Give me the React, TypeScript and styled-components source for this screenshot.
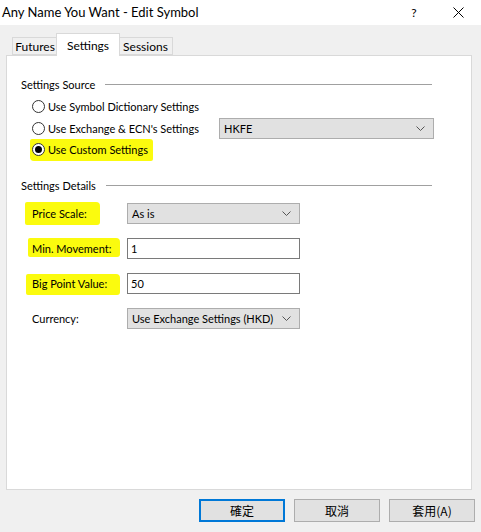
import React from "react";
import styled, { createGlobalStyle } from "styled-components";

const Global = createGlobalStyle`
  html, body { margin: 0; padding: 0; }
  body {
    background: #f0f0f0;
    font-family: Lato, "Noto Sans CJK TC", sans-serif;
    font-size: 11px;
    color: #000;
    white-space: nowrap;
  }
`;

const Window = styled.div`
  width: 481px;
  height: 532px;
  background: #f0f0f0;
  display: flex;
  flex-direction: column;
  overflow: hidden;
`;

const TitleBar = styled.div`
  height: 25px;
  background: #fff;
  display: flex;
  align-items: center;
  padding-left: 2px;
`;

const TitleText = styled.div`
  flex: 1;
  font-size: 13px;
  line-height: 25px;
  color: #000;
`;

const TitleButton = styled.div<{ $w: number; $ml?: number; $mr?: number }>`
  width: ${(p) => p.$w}px;
  height: 25px;
  margin-left: ${(p) => p.$ml ?? 0}px;
  margin-right: ${(p) => p.$mr ?? 0}px;
  display: flex;
  align-items: center;
  justify-content: center;
  font-size: 12px;
`;

const TabStrip = styled.div`
  display: flex;
  align-items: flex-end;
  padding-left: 12px;
  margin-top: 8px;
  height: 22px;
  position: relative;
  z-index: 1;
`;

const Tab = styled.div<{ $active?: boolean; $w: number }>`
  box-sizing: border-box;
  width: ${(p) => p.$w}px;
  height: ${(p) => (p.$active ? 23 : 18)}px;
  margin-bottom: ${(p) => (p.$active ? -1 : 0)}px;
  margin-left: ${(p) => (p.$active ? -2 : 0)}px;
  margin-right: ${(p) => (p.$active ? -2 : 0)}px;
  background: ${(p) => (p.$active ? "#fff" : "#f0f0f0")};
  border: 1px solid #d9d9d9;
  border-bottom: ${(p) => (p.$active ? "none" : "1px solid #d9d9d9")};
  display: flex;
  align-items: center;
  justify-content: center;
  font-size: 12px;
  padding-top: ${(p) => (p.$active ? 0 : 1)}px;
  z-index: ${(p) => (p.$active ? 2 : 1)};
`;

const Panel = styled.div`
  box-sizing: border-box;
  margin: 0 9px 0 6px;
  height: 435px;
  background: #fff;
  border: 1px solid #d9d9d9;
  padding: 20px 39px 0 14px;
  display: flex;
  flex-direction: column;
`;

const GroupHeader = styled.div<{ $mt: number }>`
  display: flex;
  align-items: center;
  height: 16px;
  gap: 10px;
  margin-top: ${(p) => p.$mt}px;
`;

const GroupLine = styled.div`
  flex: 1;
  height: 1px;
  background: #a0a0a0;
`;

const RadioList = styled.div`
  display: flex;
  flex-direction: column;
  padding-left: 9px;
  margin-top: 4px;
`;

const RadioRow = styled.div<{ $hl?: boolean }>`
  display: flex;
  align-items: center;
  height: 21.5px;
  gap: 3px;
  padding-left: 2px;
  width: fit-content;
  padding-right: ${(p) => (p.$hl ? 5 : 0)}px;
  background: ${(p) => (p.$hl ? "#fbfb0e" : "transparent")};
  border-radius: ${(p) => (p.$hl ? "2px 3px 2px 4px" : "0")};
`;

const RadioText = styled.span<{ $w?: number }>`
  width: ${(p) => (p.$w ? `${p.$w}px` : "auto")};
`;

const RadioCircle = styled.span<{ $checked?: boolean }>`
  box-sizing: border-box;
  width: 13px;
  height: 13px;
  border-radius: 50%;
  border: 1px solid #333;
  background: #fff;
  display: flex;
  align-items: center;
  justify-content: center;
  &::after {
    content: "";
    display: ${(p) => (p.$checked ? "block" : "none")};
    width: 7px;
    height: 7px;
    border-radius: 50%;
    background: #000;
  }
`;

const Combo = styled.div<{ $w: number }>`
  box-sizing: border-box;
  width: ${(p) => p.$w}px;
  height: 21px;
  background: #e1e1e1;
  border: 1px solid #adadad;
  display: flex;
  align-items: center;
  padding: 0 8px 0 4px;
  justify-content: space-between;
`;

const TextBox = styled.div`
  box-sizing: border-box;
  width: 173px;
  height: 21px;
  background: #fff;
  border: 1px solid #7a7a7a;
  display: flex;
  align-items: center;
  padding-left: 3px;
`;

const FormGrid = styled.div`
  display: grid;
  grid-template-columns: 95px 173px;
  grid-template-rows: 21px 21px 21px 21px;
  row-gap: 14px;
  margin-top: 9px;
  padding-left: 11px;
`;

const Label = styled.div<{ $hl?: boolean; $l?: number; $w?: number; $t?: number; $b?: number }>`
  position: relative;
  display: flex;
  align-items: center;
  z-index: 0;
  & > span { position: relative; z-index: 1; }
  &::before {
    content: "";
    display: ${(p) => (p.$hl ? "block" : "none")};
    position: absolute;
    left: ${(p) => p.$l ?? 0}px;
    width: ${(p) => p.$w ?? 0}px;
    top: ${(p) => p.$t ?? 0}px;
    bottom: ${(p) => p.$b ?? 0}px;
    background: #fbfb0e;
    border-radius: 2px 4px 3px 2px;
  }
`;

const Footer = styled.div`
  display: flex;
  justify-content: flex-end;
  gap: 9px;
  padding: 9px 6px 0 0;
`;

const Button = styled.div<{ $default?: boolean }>`
  box-sizing: border-box;
  width: 86px;
  height: 23px;
  background: #e1e1e1;
  border: ${(p) => (p.$default ? "2px solid #0078d7" : "1px solid #adadad")};
  display: flex;
  align-items: center;
  justify-content: center;
  font-family: "Noto Sans CJK TC", Lato, sans-serif;
  font-size: 12px;
`;

const Chevron = () => (
  <svg width="9" height="5" viewBox="0 0 9 5">
    <path d="M0.5 0.5 L4.5 4.5 L8.5 0.5" fill="none" stroke="#555" strokeWidth="1" />
  </svg>
);

const CloseIcon = () => (
  <svg width="11" height="11" viewBox="0 0 11 11">
    <path d="M0.5 0.5 L10.5 10.5 M10.5 0.5 L0.5 10.5" fill="none" stroke="#000" strokeWidth="1" />
  </svg>
);

export default function App() {
  return (
    <Window>
      <Global />
      <TitleBar>
        <TitleText>Any Name You Want - Edit Symbol</TitleText>
        <TitleButton $w={20}>?</TitleButton>
        <TitleButton $w={26} $ml={21} $mr={10}>
          <CloseIcon />
        </TitleButton>
      </TitleBar>
      <TabStrip>
        <Tab $w={46}>Futures</Tab>
        <Tab $w={64} $active>Settings</Tab>
        <Tab $w={55}>Sessions</Tab>
      </TabStrip>
      <Panel>
        <GroupHeader $mt={0}>
          <span>Settings Source</span>
          <GroupLine />
        </GroupHeader>
        <RadioList>
          <RadioRow>
            <RadioCircle />
            <RadioText>Use Symbol Dictionary Settings</RadioText>
          </RadioRow>
          <RadioRow>
            <RadioCircle />
            <RadioText $w={168}>Use Exchange &amp; ECN's Settings</RadioText>
            <Combo $w={215}>
              <span>HKFE</span>
              <Chevron />
            </Combo>
          </RadioRow>
          <RadioRow $hl>
            <RadioCircle $checked />
            <RadioText>Use Custom Settings</RadioText>
          </RadioRow>
        </RadioList>
        <GroupHeader $mt={17}>
          <span>Settings Details</span>
          <GroupLine />
        </GroupHeader>
        <FormGrid>
          <Label $hl $l={-7} $w={75} $t={-1} $b={-1}><span>Price Scale:</span></Label>
          <Combo $w={173}>
            <span>As is</span>
            <Chevron />
          </Combo>
          <Label $hl $l={-4} $w={92} $t={0} $b={2}><span>Min. Movement:</span></Label>
          <TextBox>1</TextBox>
          <Label $hl $l={-6} $w={94} $t={1} $b={-1}><span>Big Point Value:</span></Label>
          <TextBox>50</TextBox>
          <Label><span>Currency:</span></Label>
          <Combo $w={173}>
            <span>Use Exchange Settings (HKD)</span>
            <Chevron />
          </Combo>
        </FormGrid>
      </Panel>
      <Footer>
        <Button $default>確定</Button>
        <Button>取消</Button>
        <Button>套用(A)</Button>
      </Footer>
    </Window>
  );
}
